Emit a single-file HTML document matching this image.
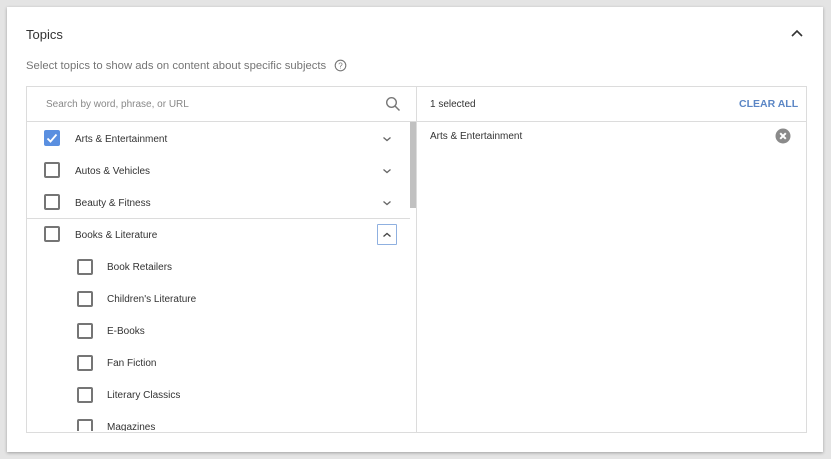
<!DOCTYPE html><html><head><style>
body{margin:0;width:831px;height:459px;background:#e4e4e4;font-family:"Liberation Sans",Arial,sans-serif;overflow:hidden;position:relative}
.card{position:absolute;left:7px;top:7px;width:816px;height:445px;background:#fff;box-shadow:0 1px 3px rgba(0,0,0,.3)}
.a{position:absolute}
.t{font-size:10px;color:#333;white-space:nowrap}
.cb{position:absolute;width:12px;height:12px;border:2px solid #757575;border-radius:2px}
.chev{position:absolute;width:14px;height:14px}
</style></head><body>
<div class="card"></div>
<div class="a" style="left:26px;top:27px;font-size:13px;color:#333">Topics</div>
<svg class="a" style="left:790px;top:28px" width="14" height="10"><path d="M2 8 L7 3 L12 8" stroke="#333" stroke-width="1.6" fill="none"/></svg>
<div class="a" style="left:26px;top:60px;font-size:11.3px;color:#757575">Select topics to show ads on content about specific subjects</div>
<svg class="a" style="left:334px;top:59px" width="13" height="13"><circle cx="6.5" cy="6.5" r="5.3" stroke="#777" stroke-width="1.1" fill="none"/><text x="6.5" y="9.5" font-size="8" text-anchor="middle" fill="#777" font-family="Liberation Sans">?</text></svg>
<div class="a" style="left:26px;top:86px;width:779px;height:345px;border:1px solid #dcdcdc"></div>
<div class="a" style="left:416px;top:86px;width:1px;height:346px;background:#dcdcdc"></div>
<div class="a" style="left:26px;top:121px;width:780px;height:1px;background:#dcdcdc"></div>
<div class="a" style="left:46px;top:99px;font-size:10px;color:#888">Search by word, phrase, or URL</div>
<svg class="a" style="left:385px;top:96px" width="16" height="16"><circle cx="6.5" cy="6.5" r="4.8" stroke="#777" stroke-width="1.4" fill="none"/><path d="M10 10 L14.5 14.5" stroke="#777" stroke-width="1.5"/></svg>
<div class="a t" style="left:430px;top:99px">1 selected</div>
<div class="a" style="left:739px;top:98px;font-size:10.5px;font-weight:bold;color:#5b86c5">CLEAR ALL</div>
<div class="a t" style="left:430px;top:131px">Arts &amp; Entertainment</div>
<svg class="a" style="left:775px;top:128px" width="16" height="16"><circle cx="8" cy="8" r="7.5" fill="#8a8a8a"/><path d="M5.2 5.2 L10.8 10.8 M10.8 5.2 L5.2 10.8" stroke="#fff" stroke-width="2"/></svg>
<div class="a" style="left:410px;top:122px;width:6px;height:86px;background:#c1c1c1"></div>
<div class="a" style="left:26px;top:218px;width:384px;height:1px;background:#dcdcdc"></div>
<div class="a" style="left:44px;top:130px;width:16px;height:16px;background:#5a8fe0;border-radius:2px"></div>
<svg class="a" style="left:44px;top:130px" width="16" height="16"><path d="M3.5 8.5 L6.5 11.5 L12.5 4.5" stroke="#fff" stroke-width="1.8" fill="none"/></svg>
<div class="a t" style="left:75px;top:134px">Arts &amp; Entertainment</div>
<div class="cb" style="left:44px;top:162px"></div><div class="a t" style="left:75px;top:166px">Autos &amp; Vehicles</div>
<div class="cb" style="left:44px;top:194px"></div><div class="a t" style="left:75px;top:198px">Beauty &amp; Fitness</div>
<div class="cb" style="left:44px;top:226px"></div><div class="a t" style="left:75px;top:230px">Books &amp; Literature</div>
<svg class="chev" style="left:380px;top:132px"><path d="M3.5 5.5 L7 8.5 L10.5 5.5" stroke="#666" stroke-width="1.3" fill="none"/></svg>
<svg class="chev" style="left:380px;top:164px"><path d="M3.5 5.5 L7 8.5 L10.5 5.5" stroke="#666" stroke-width="1.3" fill="none"/></svg>
<svg class="chev" style="left:380px;top:196px"><path d="M3.5 5.5 L7 8.5 L10.5 5.5" stroke="#666" stroke-width="1.3" fill="none"/></svg>
<div class="a" style="left:377px;top:224px;width:18px;height:19px;border:1px solid #8fb0e0;border-radius:1px"></div>
<svg class="chev" style="left:380px;top:228px"><path d="M3.5 8.5 L7 5.5 L10.5 8.5" stroke="#444" stroke-width="1.3" fill="none"/></svg>
<div style="position:absolute;left:27px;top:250px;width:383px;height:181px;overflow:hidden">
<div class="cb" style="left:50px;top:9px"></div><div class="a t" style="left:80px;top:12px">Book Retailers</div>
<div class="cb" style="left:50px;top:41px"></div><div class="a t" style="left:80px;top:44px">Children's Literature</div>
<div class="cb" style="left:50px;top:73px"></div><div class="a t" style="left:80px;top:76px">E-Books</div>
<div class="cb" style="left:50px;top:105px"></div><div class="a t" style="left:80px;top:108px">Fan Fiction</div>
<div class="cb" style="left:50px;top:137px"></div><div class="a t" style="left:80px;top:140px">Literary Classics</div>
<div class="cb" style="left:50px;top:169px"></div><div class="a t" style="left:80px;top:172px">Magazines</div>
</div>
</body></html>
